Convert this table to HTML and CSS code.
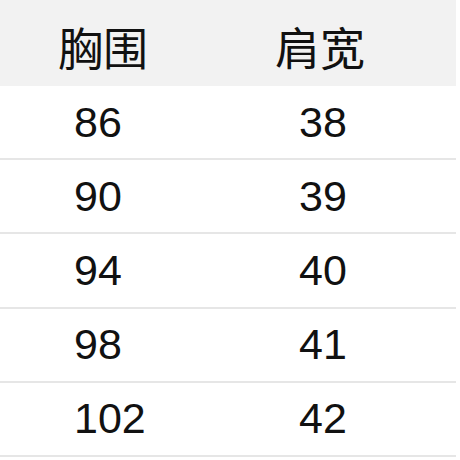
FILE: index.html
```html
<!DOCTYPE html>
<html lang="zh">
<head>
<meta charset="utf-8">
<link rel="stylesheet" href="styles.css">
</head>
<body>
<div class="table">
  <div class="row head">
    <div class="cell c1">胸围</div>
    <div class="cell">肩宽</div>
  </div>
  <div class="row body-row">
    <div class="cell c1">86</div>
    <div class="cell">38</div>
  </div>
  <div class="row body-row">
    <div class="cell c1">90</div>
    <div class="cell">39</div>
  </div>
  <div class="row body-row">
    <div class="cell c1">94</div>
    <div class="cell">40</div>
  </div>
  <div class="row body-row">
    <div class="cell c1">98</div>
    <div class="cell">41</div>
  </div>
  <div class="row body-row">
    <div class="cell c1">102</div>
    <div class="cell">42</div>
  </div>
</div>
</body>
</html>
```
FILE: styles.css
```css
html, body {
  margin: 0;
  padding: 0;
  background: #ffffff;
}
.table {
  width: 456px;
  color: #111111;
}
.row {
  display: flex;
  align-items: center;
  box-sizing: border-box;
}
.head {
  height: 86px;
  background: #f2f2f2;
  padding-left: 58px;
  padding-top: 6px;
  font-family: "Noto Sans CJK SC", "Noto Sans", sans-serif;
  font-size: 45px;
  line-height: 1;
}
.head .c1 {
  width: 217px;
}
.body-row {
  height: 74.2px;
  border-bottom: 2px solid #e6e6e6;
  padding-left: 74px;
  font-family: "Liberation Sans", Arial, sans-serif;
  font-size: 43px;
  line-height: 1;
}
.body-row .c1 {
  width: 225px;
}
```
